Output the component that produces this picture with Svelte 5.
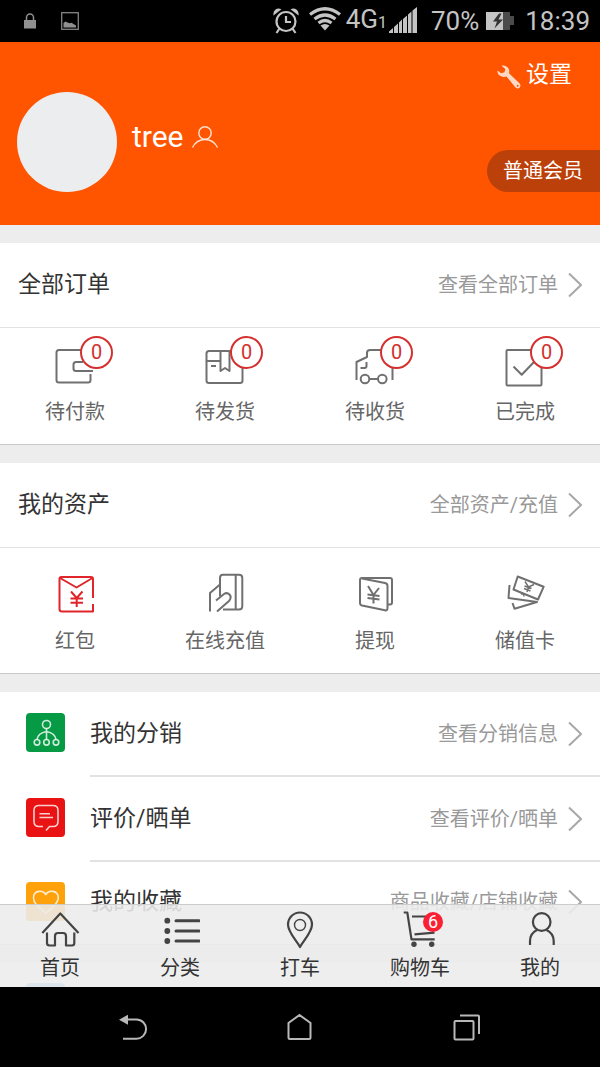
<script>
  const orders = [
    { icon: 'wallet', label: '待付款', count: 0 },
    { icon: 'box', label: '待发货', count: 0 },
    { icon: 'truck', label: '待收货', count: 0 },
    { icon: 'done', label: '已完成', count: 0 }
  ];

  const assets = [
    { icon: 'envelope', label: '红包' },
    { icon: 'handcard', label: '在线充值' },
    { icon: 'withdraw', label: '提现' },
    { icon: 'cards', label: '储值卡' }
  ];

  const links = [
    { icon: 'network', label: '我的分销', hint: '查看分销信息' },
    { icon: 'comment', label: '评价/晒单', hint: '查看评价/晒单' },
    { icon: 'heart', label: '我的收藏', hint: '商品收藏/店铺收藏' }
  ];

  const tabs = [
    { icon: 'home', label: '首页' },
    { icon: 'list', label: '分类' },
    { icon: 'pin', label: '打车' },
    { icon: 'cart', label: '购物车', count: 6 },
    { icon: 'me', label: '我的' }
  ];
</script>

{#snippet chevron()}
  <svg class="chevron" width="14" height="26" viewBox="0 0 14 26" aria-hidden="true">
    <path d="M1 1.5L13 13L1 24.5" />
  </svg>
{/snippet}

{#snippet icon(name)}
  <svg class="icon icon--{name}" width="40" height="40" viewBox="0 0 40 40" aria-hidden="true">
    {#if name === 'wallet'}
      <path d="M27 2H4Q1.5 2 1.5 4.5V32Q1.5 34.5 4 34.5H33Q35.5 34.5 35.5 32V26" />
      <path d="M28 14H21Q18.5 14 18.5 16.5V20.5Q18.5 23 21 23H38" />
    {:else if name === 'box'}
      <path d="M28 3H4Q1.5 3 1.5 5.5V32.5Q1.5 35 4 35H35Q37.5 35 37.5 32.5V20" />
      <path d="M1.5 13H15.5M6 18H11M15.5 3V23L20 20L24.5 23V3" />
    {:else if name === 'truck'}
      <path d="M1.5 32V14L12 9V5Q12 2 15 2H28M37.5 20V32" />
      <path d="M11.5 14V18Q11.5 20 9.5 20H5.5M14.5 31H23" />
      <circle cx="10" cy="31" r="4.3" />
      <circle cx="27.3" cy="31" r="4.3" />
    {:else if name === 'done'}
      <rect x="1.5" y="2" width="35" height="35.5" rx="1" />
      <path d="M8.5 18.5L16.7 26.7L29 14" />
    {:else if name === 'envelope'}
      <path d="M38 25V6Q38 4 36 4H6.5Q4.5 4 4.5 6V36Q4.5 38.5 7 38.5H38V31" />
      <path d="M5 5L21.5 14.5L37.5 5" />
      <path d="M16 18.5L21.7 25L27.5 18.5M21.7 25V34M15.5 25.5H28M15.5 29.7H28" />
    {:else if name === 'handcard'}
      <path d="M15 23.5V5Q15 1.8 18 1.8H34Q37.3 1.8 37.3 5V33.3Q37.3 36.5 34 36.5H18M30.7 2V36.5" />
      <path d="M5 38.5V20L15 11.5M11 27.5L19 21Q22 19 24.5 21.5Q27 24.5 24 28L12 38.5" />
    {:else if name === 'withdraw'}
      <path d="M7 5.5L30 10Q32.5 10.5 32.5 13V35Q32.5 38 30 37.3L7 32.5Q5 32 5 30V7Q5 5 7 5H35Q37 5 37 7V29.5Q37 31.5 35 31.5H32.5" />
      <path d="M13 13L18.5 22L24 15M18.5 22V30.5M12.5 21.5L24.5 23M12.5 25L24.5 26.5" />
    {:else if name === 'cards'}
      <path d="M12.7 3.5L38.7 13.7L33 26.5L8.5 16.5Z" />
      <path d="M4.5 12L3.5 25L32 29L9.5 35.7L7.5 30" />
      <path class="thin" d="M20 8.5L23.5 14L29 11.5M23.5 14L22 19M19.5 13L26.5 15.5M19 15.5L25.5 18M16 21Q19 20 19 23.5" />
    {:else if name === 'network'}
      <circle cx="20.5" cy="11.5" r="4" />
      <circle cx="11" cy="29.3" r="2.8" />
      <circle cx="20.5" cy="29.3" r="2.8" />
      <circle cx="30" cy="29.3" r="2.8" />
      <path d="M20.5 15.5V26.5M11 26.5Q12 20 20.5 18.5Q29 20 30 26.5" />
    {:else if name === 'comment'}
      <path d="M17 28.5H13Q8 28.5 8 23.5V12.5Q8 7.5 13 7.5H27Q32 7.5 32 12.5V23.5Q32 28.5 27 28.5H23.5L20 32.5" />
      <path d="M13.5 15.7H24M13.5 19.5H27" />
    {:else if name === 'heart'}
      <path d="M19.8 12.5C17 7.5 7.5 8 7.5 16C7.5 22 14 26 19.8 31C25.5 26 32.3 22 32.3 16C32.3 8 22.5 7.5 19.8 12.5Z" />
    {:else if name === 'home'}
      <path d="M2.3 23L20.3 3.5L38.5 23" />
      <path d="M7 22.5V33Q7 35.5 9.5 35.5H15V26Q15 23 18 23H23Q26 23 26 26V35.5H32Q34.3 35.5 34.3 33V22.5" />
    {:else if name === 'list'}
      <path class="bar" d="M16 10.7H39M16 21H39M16 31H39" />
      <circle class="fill" cx="7.3" cy="10.7" r="2.9" />
      <circle class="fill" cx="7.3" cy="21" r="2.9" />
      <circle class="fill" cx="7.3" cy="31" r="2.9" />
    {:else if name === 'pin'}
      <path d="M20 37C16 30 8 22 8 14.5A12 12 0 0 1 32 14.5C32 22 24 30 20 37Z" />
      <circle class="thin" cx="20" cy="15" r="5.5" />
    {:else if name === 'cart'}
      <path d="M3.7 2.5H7.3L11.5 29.3H34.7M12 6.5H34M14.5 24.3L34.5 22.7" />
      <circle class="fill" cx="14" cy="34.3" r="2.7" />
      <circle class="fill" cx="31.7" cy="34.3" r="2.7" />
    {:else if name === 'me'}
      <circle cx="21.7" cy="12" r="8.8" />
      <path d="M10 35V31Q10 23.5 17 20M26.5 20Q33.7 23.5 33.7 31V35" />
    {/if}
  </svg>
{/snippet}

<div class="phone">
  <div class="status">
    <svg width="12" height="16" viewBox="0 0 12 16" aria-hidden="true">
      <path d="M0 7h12v8.5H0z" fill="#909090" />
      <path d="M2.5 7V4.5a3.5 3.5 0 0 1 7 0V7" fill="none" stroke="#909090" stroke-width="1.5" />
    </svg>
    <svg class="status__picture" width="18" height="18" viewBox="0 0 18 18" aria-hidden="true">
      <rect x=".7" y=".7" width="16.6" height="16.6" fill="none" stroke="#858585" stroke-width="1.3" />
      <path d="M2.5 15.5V11l2-1.5 2 1 2 .8 2-.5 2 1.2 2.5 1.5v2z" fill="#909090" />
    </svg>
    <svg class="status__alarm" width="26" height="26" viewBox="0 0 26 26" aria-hidden="true">
      <circle cx="13" cy="13.5" r="9.5" fill="none" stroke="#c4c4c4" stroke-width="2.2" />
      <path d="M13 8v6h5M6.5 20.5L3.5 25M19.5 20.5l3 4.5" fill="none" stroke="#c4c4c4" stroke-width="2.2" />
      <path d="M.5 7.5Q-.2 3.5 2.5 1.5T8.5 1.2zM25.5 7.5Q26.2 3.5 23.5 1.5T17.5 1.2z" fill="#c4c4c4" />
    </svg>
    <svg class="status__wifi" width="32" height="24" viewBox="0 0 32 24" aria-hidden="true">
      <path d="M1 7.5Q16-4 31 7.5M5.5 12Q16 4 26.5 12M9.5 16Q16 11 22.5 16" fill="none" stroke="#c4c4c4" stroke-width="3.2" />
      <path d="M11.5 18.5Q16 15.5 20.5 18.5L16 23.5z" fill="#c4c4c4" />
    </svg>
    <span class="status__net">4G<small>1</small></span>
    <svg class="status__signal" width="28" height="26" viewBox="0 0 28 26" aria-hidden="true">
      <path d="M0 26V24.5L4 21V26zM5 26V20L9 16.5V26zM10 26V15.5L13 12.5V26zM14 26V12L18 8.5V26zM19 26V7.5L22.5 4.5V26zM23.5 26V3.5L28 0V26z" fill="#c4c4c4" />
    </svg>
    <span class="status__battery">70%</span>
    <svg width="28" height="18" viewBox="0 0 28 18" aria-hidden="true">
      <path d="M17 0h7v4h4v9h-4v5h-7z" fill="#4b4b4b" />
      <path d="M0 0h17v18H0z" fill="#c4c4c4" />
      <path d="M13 1.5L7 9.5h4L8.5 16.5L17 7.5h-4.5L15.5 1.5z" fill="#333" />
    </svg>
    <span class="status__time">18:39</span>
  </div>

  <div class="screen">
    <main class="content">
      <header class="profile">
        <div class="profile__avatar"></div>
        <div class="profile__name">
          <span>tree</span>
          <svg width="26" height="22" viewBox="0 0 26 22" aria-hidden="true">
            <circle cx="13" cy="7" r="6.2" />
            <path d="M.5 21.5Q4.5 13.5 13 13.5T25.5 21.5" />
          </svg>
        </div>
        <div class="profile__side">
          <a class="profile__settings" href="#settings">
            <svg width="24" height="24" viewBox="0 0 24 24" aria-hidden="true">
              <path d="M4.5.8Q8 0 10.5 2.3T12 8.3L22.7 18.5Q24.2 20.5 22.7 22.5T18.5 22.5L9.5 11.5Q5.5 12.8 2.7 10.6T.5 5.5L4 8.3L7.5 7.3L8.3 4z" fill="#ffd9c4" />
              <circle cx="20.7" cy="20.7" r="1" fill="#ff5500" />
            </svg>
            设置
          </a>
          <span class="profile__level">普通会员</span>
        </div>
      </header>

      <section class="card">
        <a class="card__head" href="#orders">
          <h2>全部订单</h2>
          <span class="hint">查看全部订单</span>
          {@render chevron()}
        </a>
        <div class="grid grid--orders">
          {#each orders as item}
            <a class="grid__item" href="#{item.icon}">
              <span class="grid__icon">
                {@render icon(item.icon)}
                <span class="grid__count">{item.count}</span>
              </span>
              {item.label}
            </a>
          {/each}
        </div>
      </section>

      <section class="card">
        <a class="card__head" href="#assets">
          <h2>我的资产</h2>
          <span class="hint">全部资产/充值</span>
          {@render chevron()}
        </a>
        <div class="grid grid--assets">
          {#each assets as item}
            <a class="grid__item" href="#{item.icon}">
              <span class="grid__icon">{@render icon(item.icon)}</span>
              {item.label}
            </a>
          {/each}
        </div>
      </section>

      <section class="card">
        {#each links as link}
          <a class="link" href="#{link.icon}">
            <span class="tile tile--{link.icon}">{@render icon(link.icon)}</span>
            <span class="link__body">
              <span class="link__label">{link.label}</span>
              <span class="hint">{link.hint}</span>
              {@render chevron()}
            </span>
          </a>
        {/each}
      </section>

      <section class="card">
        <div class="link">
          <span class="tile tile--more"></span>
        </div>
      </section>
    </main>

    <nav class="tabbar">
      {#each tabs as tab}
        <a class="tabbar__item" href="#{tab.icon}">
          <span class="tabbar__icon">
            {@render icon(tab.icon)}
            {#if tab.count}
              <span class="tabbar__count">{tab.count}</span>
            {/if}
          </span>
          {tab.label}
        </a>
      {/each}
    </nav>
  </div>

  <div class="keys">
    <button aria-label="Back">
      <svg width="30" height="30" viewBox="0 0 30 30">
        <path d="M9 7.5H18.5A9.5 9.5 0 0 1 18.5 26.7H5" />
        <path class="keys__head" d="M1 7.7L10 2.7V12.7Z" />
      </svg>
    </button>
    <button aria-label="Home">
      <svg width="30" height="30" viewBox="0 0 30 30">
        <path d="M14.5 3L25.5 11V25.5Q25.5 27 24 27H5Q3.5 27 3.5 25.5V11Z" />
      </svg>
    </button>
    <button aria-label="Recent apps">
      <svg width="30" height="30" viewBox="0 0 30 30">
        <rect x="2.5" y="9" width="19" height="18.5" rx="1" />
        <path d="M8 3.5H26Q27 3.5 27 4.5V22" />
      </svg>
    </button>
  </div>
</div>

<style>
  :global(body) {
    background: #000;
  }

  .phone {
    --orange: #ff5400;
    --red: #d3302f;
    --line: #e2e2e2;
    --text: #333;
    --muted: #999;
    display: flex;
    flex-direction: column;
    height: 100vh;
    font-family: Roboto, 'Noto Sans CJK SC', sans-serif;
    font-size: 20px;
    line-height: 24px;
    color: var(--text);
    overflow: hidden;
  }

  a {
    color: inherit;
    text-decoration: none;
  }

  svg {
    display: block;
    flex: none;
  }

  .status {
    display: flex;
    align-items: center;
    flex: none;
    height: 42px;
    padding: 0 10px 0 24px;
    background: #000;
    color: #c4c4c4;
    font-size: 26px;
  }

  .status__picture {
    margin-left: 25px;
  }

  .status__alarm {
    margin-left: auto;
  }

  .status__wifi {
    margin: 0 5px 4px 10px;
  }

  .status__net small {
    font-size: 16px;
  }

  .status__signal {
    margin: 0 14px 2px 2px;
  }

  .status__battery {
    margin-right: 7px;
  }

  .status__time {
    margin-left: 11px;
  }

  .screen {
    position: relative;
    flex: 1;
    min-height: 0;
    background: #ededed;
  }

  .content {
    height: 100%;
    overflow: hidden;
  }

  .profile {
    display: flex;
    align-items: center;
    height: 183px;
    background: var(--orange);
    color: #fff;
  }

  .profile__avatar {
    width: 100px;
    height: 100px;
    margin: 17px 15px 0 17px;
    border-radius: 50%;
    background: #ecedef;
  }

  .profile__name {
    display: flex;
    align-items: center;
    flex: 1;
    gap: 8px;
    padding-top: 6px;
    font-size: 30px;
    line-height: 36px;
  }

  .profile__name svg {
    fill: none;
    stroke: #ffe3d3;
    stroke-width: 1.4;
  }

  .profile__side {
    display: flex;
    flex-direction: column;
    align-items: flex-end;
    align-self: stretch;
    justify-content: space-between;
    padding: 17px 0 33px;
  }

  .profile__settings {
    display: flex;
    align-items: center;
    gap: 5px;
    margin-right: 28px;
    font-size: 23px;
    line-height: 32px;
  }

  .profile__settings svg {
    margin-top: 4px;
  }

  .profile__level {
    padding: 0 17px 0 16px;
    border-radius: 21px 0 0 21px;
    background: #bc4009;
    line-height: 42px;
  }

  .card {
    margin-top: 18px;
    background: #fff;
    border-bottom: 1px solid #c8c8c8;
  }

  .card__head {
    display: flex;
    align-items: center;
    height: 84px;
    padding: 0 18px;
    border-bottom: 1px solid var(--line);
  }

  h2 {
    flex: 1;
    margin: 0;
    font-size: 23px;
    font-weight: 400;
    line-height: 32px;
  }

  .hint {
    color: var(--muted);
  }

  .chevron {
    margin-left: 10px;
    fill: none;
    stroke: #a8a8a8;
    stroke-width: 2;
  }

  .icon {
    fill: none;
    stroke: #707070;
    stroke-width: 2;
    stroke-linejoin: round;
  }

  .icon--envelope {
    stroke: #e0252b;
  }

  .icon .thin {
    stroke-width: 1.4;
  }

  .icon .bar {
    stroke-width: 3;
    stroke-linecap: round;
  }

  .icon .fill {
    fill: #444;
    stroke: none;
  }

  .grid {
    display: grid;
    grid-template-columns: repeat(4, 1fr);
  }

  .grid--orders {
    padding: 20px 0;
  }

  .grid--assets {
    padding: 25px 0 20px;
  }

  .grid__item {
    display: flex;
    flex-direction: column;
    align-items: center;
    gap: 12px;
    color: #666;
  }

  .grid--assets .grid__item {
    gap: 16px;
  }

  .grid__icon {
    position: relative;
  }

  .grid__count {
    position: absolute;
    top: -12px;
    left: 25px;
    width: 29px;
    border: 2px solid var(--red);
    border-radius: 50%;
    background: #fff;
    color: var(--red);
    line-height: 29px;
    text-align: center;
  }

  .link {
    display: flex;
    align-items: center;
    height: 85px;
    padding-left: 26px;
  }

  .link__body {
    display: flex;
    align-items: center;
    flex: 1;
    align-self: stretch;
    margin-left: 25px;
    padding-right: 18px;
    border-bottom: 2px solid var(--line);
  }

  .link:last-child {
    height: 82px;
  }

  .link:last-child .link__body {
    border-color: transparent;
  }

  .link__label {
    flex: 1;
    font-size: 23px;
    line-height: 32px;
  }

  .tile {
    width: 39px;
    height: 39px;
    margin-bottom: 4px;
    border-radius: 4px;
    overflow: hidden;
  }

  .tile .icon {
    stroke: #fff;
    stroke-opacity: 0.8;
    stroke-width: 1.6;
  }

  .tile--network {
    background: #069a45;
  }

  .tile--comment {
    background: #ea1313;
  }

  .tile--heart {
    background: #ffa10a;
  }

  .tile--more {
    background: #6fb4ea;
  }

  .tabbar {
    position: absolute;
    right: 0;
    bottom: 0;
    left: 0;
    display: grid;
    grid-template-columns: repeat(5, 1fr);
    padding: 5px 0 7px;
    border-top: 1px solid #ccc;
    background: rgba(236, 236, 236, 0.88);
  }

  .tabbar__item {
    display: flex;
    flex-direction: column;
    align-items: center;
    gap: 6px;
  }

  .tabbar__icon {
    position: relative;
  }

  .tabbar .icon {
    stroke: #444;
    stroke-width: 2.2;
  }

  .tabbar__count {
    position: absolute;
    top: 2px;
    left: 23px;
    width: 20px;
    border-radius: 50%;
    background: #fb1f33;
    color: #fff;
    font-size: 18px;
    line-height: 20px;
    text-align: center;
  }

  .keys {
    display: flex;
    flex: none;
    height: 80px;
    padding: 0 50px;
    background: #000;
  }

  .keys button {
    display: flex;
    align-items: center;
    justify-content: center;
    flex: 1;
    padding: 0;
    border: 0;
    background: none;
  }

  .keys svg {
    fill: none;
    stroke: #b8b8b8;
    stroke-width: 2;
  }

  .keys .keys__head {
    fill: #b8b8b8;
    stroke: none;
  }
</style>
